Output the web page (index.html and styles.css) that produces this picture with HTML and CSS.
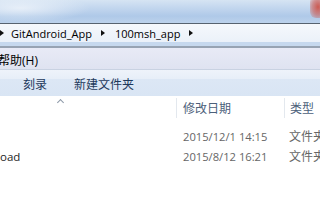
FILE: index.html
```html
<!DOCTYPE html>
<html>
<head>
<meta charset="utf-8">
<link rel="stylesheet" href="styles.css">
</head>
<body>
<div class="win">
  <div class="title"><span class="close"></span></div>
  <div class="addr">
    <span class="tri first"></span>
    <span class="crumb">GitAndroid_App</span>
    <span class="tri"></span>
    <span class="crumb">100msh_app</span>
    <span class="tri"></span>
  </div>
  <div class="sep"></div>
  <div class="menubar"><span class="menu">帮助(H)</span></div>
  <div class="toolbar">
    <span class="tool burn">刻录</span>
    <span class="tool">新建文件夹</span>
  </div>
  <div class="header">
    <div class="hcell name"><span class="sort"></span></div>
    <div class="hcell date">修改日期</div>
    <div class="hcell type">类型</div>
  </div>
  <div class="rows">
    <div class="row">
      <div class="cell name"></div>
      <div class="cell date">2015/12/1 14:15</div>
      <div class="cell type">文件夹</div>
    </div>
    <div class="row">
      <div class="cell name">oad</div>
      <div class="cell date">2015/8/12 16:21</div>
      <div class="cell type">文件夹</div>
    </div>
  </div>
</div>
</body>
</html>
```
FILE: styles.css
```css
html, body {
  margin: 0;
  padding: 0;
}
body {
  width: 320px;
  height: 200px;
  overflow: hidden;
  background: #fff;
  font-family: "Open Sans", "Noto Sans CJK SC", sans-serif;
  font-size: 11px;
}
.win {
  display: flex;
  flex-direction: column;
  height: 200px;
}
.title {
  height: 23px;
  position: relative;
  background:
    radial-gradient(ellipse 70px 14px at 20px 8px, rgba(240,245,251,0.8), rgba(240,245,251,0)),
    linear-gradient(180deg, #d6e4f3 0%, #c2d6ee 35%, #afc9e8 70%, #bcd2ec 100%);
}
.close {
  position: absolute;
  right: -6px;
  top: -4px;
  width: 16px;
  height: 22px;
  border-radius: 6px;
  background: radial-gradient(ellipse at center, #cc5a52 0%, rgba(204,90,82,0.6) 50%, rgba(204,90,82,0) 100%);
}
.addr {
  height: 18px;
  border-top: 1px solid #56626f;
  border-bottom: 4px solid #c6d8ee;
  background: linear-gradient(180deg, #f5f8fc, #ebf1f9);
  display: flex;
  align-items: center;
  font-size: 11px;
  color: #000;
}
.tri {
  width: 0;
  height: 0;
  border-top: 3px solid transparent;
  border-bottom: 3px solid transparent;
  border-left: 4px solid #111;
  margin: 0 10px 0 9px;
}
.tri.first {
  margin-left: 0;
  margin-right: 7px;
}
.crumb {
  line-height: 18px;
  padding-top: 1px;
}
.sep {
  height: 2px;
  background: #97a3b3;
}
.menubar {
  height: 21px;
  padding-top: 3px;
  box-sizing: border-box;
  background: linear-gradient(180deg, #e8eaf6, #dfe3f1);
  display: flex;
  align-items: center;
  font-size: 12px;
  color: #000;
}
.menu {
  margin-left: -2px;
}
.toolbar {
  height: 27px;
  padding-top: 2px;
  box-sizing: border-box;
  border-top: 1px solid #c9d2e2;
  background: linear-gradient(180deg, #eef3fa 0%, #e7eef8 34%, #dce7f5 36%, #d9e5f4 100%);
  display: flex;
  align-items: center;
  font-size: 12px;
  color: #1e395b;
}
.tool.burn {
  margin-left: 23px;
  margin-right: 27px;
}
.header {
  height: 20px;
  padding-top: 2px;
  display: grid;
  grid-template-columns: 176px 108px 1fr;
  color: #4c607a;
  font-size: 12px;
}
.hcell {
  position: relative;
  display: flex;
  align-items: center;
}
.hcell.date {
  border-left: 1px solid #e3e8ee;
  padding-left: 6px;
}
.hcell.type {
  border-left: 1px solid #e3e8ee;
  padding-left: 5px;
}
.sort {
  position: absolute;
  left: 58px;
  top: 2px;
  width: 4px;
  height: 4px;
  border-left: 1px solid #8d99a8;
  border-top: 1px solid #8d99a8;
  transform: rotate(45deg);
}
.rows {
  margin-top: 8px;
}
.row {
  height: 20px;
  display: grid;
  grid-template-columns: 176px 108px 1fr;
  align-items: center;
}
.cell {
  white-space: nowrap;
  overflow: hidden;
}
.cell.name {
  color: #1e1e1e;
  font-size: 11.5px;
}
.cell.date {
  padding-left: 7px;
  color: #666;
  font-size: 11.2px;
}
.cell.type {
  padding-left: 5px;
  color: #666;
  font-size: 12px;
}
```
